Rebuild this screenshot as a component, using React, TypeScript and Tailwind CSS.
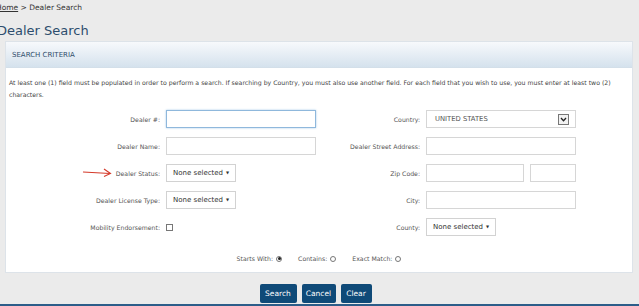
const font = { fontFamily: '"DejaVu Sans", Verdana, sans-serif' };

function Label({ children }: { children: React.ReactNode }) {
  return (
    <div className="flex items-center justify-end text-[6.2px] text-[#555]">{children}</div>
  );
}

function TextBox({ focused, className = "w-[150px]" }: { focused?: boolean; className?: string }) {
  return (
    <div
      className={`h-[18px] bg-white ${className} ${
        focused
          ? "border border-[#8fb8dc] shadow-[0_0_2px_#a9cbe8]"
          : "border border-[#d6d6d6]"
      }`}
    />
  );
}

function Multi() {
  return (
    <div className="flex h-[18px] w-[70px] items-center border border-[#d2d2d2] bg-white pl-[6px] text-[7px] text-[#333]">
      None selected
      <span className="ml-[3px] text-[4px]">▼</span>
    </div>
  );
}

function Radio({ checked }: { checked?: boolean }) {
  return (
    <span className="ml-[3px] inline-flex h-[6px] w-[6px] items-center justify-center rounded-full border border-[#777] bg-white">
      {checked && <span className="h-[3px] w-[3px] rounded-full bg-[#222]" />}
    </span>
  );
}

export default function App() {
  return (
    <div className="h-[306px] w-[639px] overflow-hidden bg-[#ebebeb]" style={font}>
      {/* breadcrumb + title */}
      <div className="-ml-[4px] pt-[2px] text-[7.5px] text-[#333]">
        <span className="underline">Home</span> &gt; Dealer Search
      </div>
      <h1 className="-ml-[3px] mt-[11px] text-[13px] leading-none text-[#2d4d6d]">Dealer Search</h1>

      {/* panel */}
      <div className="ml-[5px] mt-[4px] w-[628px] border border-[#dde3e9] bg-white">
        <div className="flex h-[26px] items-center border-b border-[#d3dfe9] bg-gradient-to-b from-[#f7f9fc] to-[#d5e2ed] pl-[6px] text-[7px] text-[#2f4d6b]">
          SEARCH CRITERIA
        </div>

        <div className="h-[204px]">
          <p className="px-[3px] pt-[9px] text-[6.2px] leading-[12px] text-[#444]">
            At least one (1) field must be populated in order to perform a search. If searching by Country, you must also use another field. For each field that you wish to use, you must enter at least two (2)
            <br />
            characters.
          </p>

          <div className="mt-[9px] grid grid-cols-[154px_150px_98px_150px] gap-x-[6px] gap-y-[9px]">
            <Label>Dealer #:</Label>
            <TextBox focused />
            <Label>Country:</Label>
            <div className="flex h-[18px] w-[150px] items-center justify-between border border-[#d6d6d6] bg-white pl-[8px] pr-[6px] text-[6.8px] text-[#555]">
              UNITED STATES
              <span className="flex h-[11px] w-[11px] items-center justify-center border border-[#777] bg-[#f2f2f2]">
                <svg width="7" height="5" viewBox="0 0 7 5">
                  <path d="M1 1 L3.5 3.8 L6 1" fill="none" stroke="#222" strokeWidth="1.3" />
                </svg>
              </span>
            </div>

            <Label>Dealer Name:</Label>
            <TextBox />
            <Label>Dealer Street Address:</Label>
            <TextBox />

            <div className="relative flex items-center justify-end">
              <svg className="absolute left-[76px] top-[3px]" width="30" height="10" viewBox="0 0 30 10">
                <path d="M1 5 L28 6.5" fill="none" stroke="#d43a2a" strokeWidth="1.1" />
                <path d="M22 2 L28.5 6.5 L22 9.5" fill="none" stroke="#d43a2a" strokeWidth="1.1" />
              </svg>
              <span className="text-[6.2px] text-[#555]">Dealer Status:</span>
            </div>
            <Multi />
            <Label>Zip Code:</Label>
            <div className="flex gap-[6px]">
              <TextBox className="w-[98px]" />
              <TextBox className="w-[46px]" />
            </div>

            <Label>Dealer License Type:</Label>
            <Multi />
            <Label>City:</Label>
            <TextBox />

            <Label>Mobility Endorsement:</Label>
            <div className="flex items-center">
              <span className="h-[7px] w-[7px] border border-[#777] bg-white" />
            </div>
            <Label>County:</Label>
            <Multi />
          </div>

          <div className="mt-[18px] flex items-center justify-center gap-[16px] text-[6.2px] text-[#555]">
            <span className="flex items-center">Starts With:<Radio checked /></span>
            <span className="flex items-center">Contains:<Radio /></span>
            <span className="flex items-center">Exact Match:<Radio /></span>
          </div>
        </div>
      </div>

      {/* buttons */}
      <div className="mt-[11px] flex justify-center gap-[5px] pr-[8px] text-[7.5px] text-white">
        <button className="h-[19px] w-[37px] rounded-[2px] bg-[#0f4a78]">Search</button>
        <button className="h-[19px] w-[34px] rounded-[2px] bg-[#0f4a78]">Cancel</button>
        <button className="h-[19px] w-[31px] rounded-[2px] bg-[#0f4a78]">Clear</button>
      </div>
      <div className="mt-[1px] h-[4px] bg-[#2c5d89]" />
    </div>
  );
}
